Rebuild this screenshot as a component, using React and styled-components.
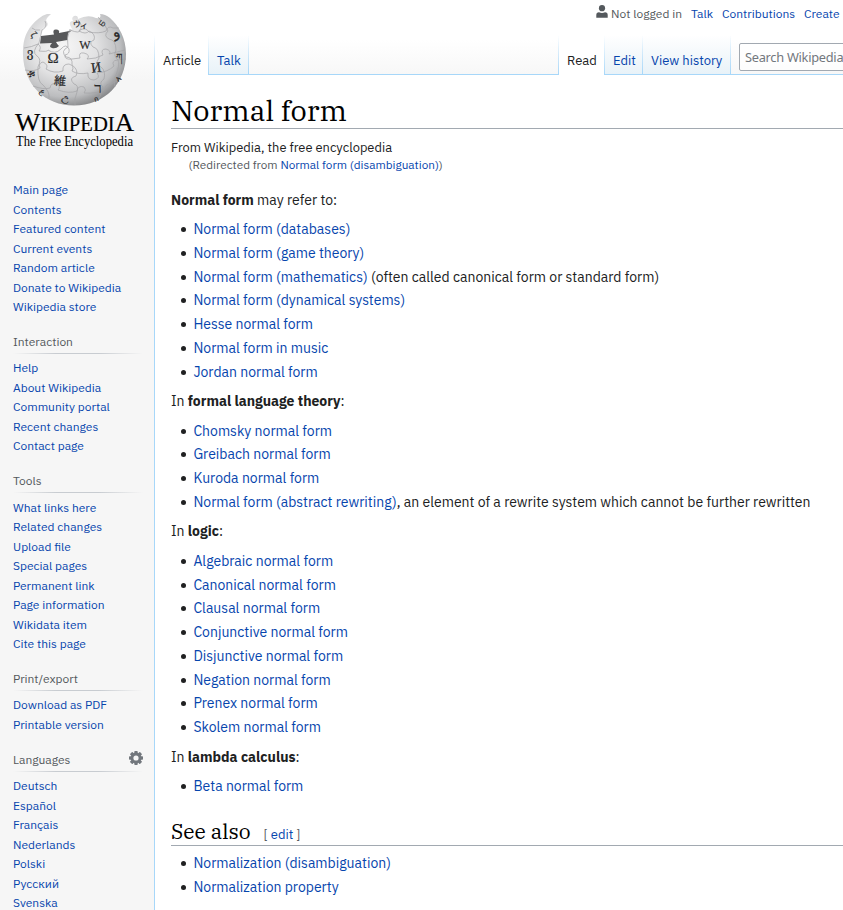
import React from "react";
import styled, { createGlobalStyle, css } from "styled-components";

const sans = '"IBM Plex Sans", Roboto, "Liberation Sans", sans-serif';

const Global = createGlobalStyle`
  *, *::before, *::after { box-sizing: border-box; }
  html, body { margin: 0; padding: 0; background: #fff; overflow: hidden; }
  body { font-family: ${sans}; color: #202122; }
`;

const Page = styled.div`
  display: grid;
  grid-template-columns: 154px 1fr;
  width: 100%;
  height: 910px;
  overflow: hidden;
  background: #f6f6f6 linear-gradient(#fff 50%, #f6f6f6 100%) 0 0 / 100% 80px no-repeat;
`;

const Link = styled.a`
  color: #0645ad;
  text-decoration: none;
`;

const Sidebar = styled.aside`
  height: 910px;
  overflow: hidden;
`;

const LogoLink = styled.a`
  display: block;
  height: 160px;
  svg { display: block; }
`;

const Portal = styled.nav`
  margin: 0 11px 0 13px;
  padding-top: ${(p) => (p.$first ? "20px" : "16.5px")};
`;

const PortalHead = styled.h3`
  display: flex;
  justify-content: space-between;
  align-items: center;
  height: 21px;
  margin: 0;
  padding-bottom: 4px;
  font-size: 12px;
  font-weight: 400;
  color: #54595d;
  background: linear-gradient(to right, rgba(200, 204, 209, 0), #c8ccd1 33%, #c8ccd1 66%, rgba(200, 204, 209, 0)) bottom / 100% 1px no-repeat;
  svg { margin-top: -3px; }
`;

const PortalList = styled.ul`
  list-style: none;
  margin: 0;
  padding: ${(p) => (p.$first ? "0" : "4.25px")} 0 0;
`;

const PortalItem = styled.li`
  height: 19.5px;
  padding: 3px 0;
  font-size: 12px;
  line-height: 13.5px;
  white-space: nowrap;
`;

const Main = styled.div`
  display: flex;
  flex-direction: column;
  min-width: 0;
  height: 910px;
  overflow: hidden;
`;

const fade = "linear-gradient(to bottom, rgba(167,215,249,0), #a7d7f9)";

const Header = styled.header`
  flex: none;
  display: flex;
  flex-direction: column;
  height: 75px;
  background:
    ${fade} 0 100% / 1px 40px no-repeat,
    linear-gradient(#a7d7f9, #a7d7f9) 1px 100% / 100% 1px no-repeat;
`;

const Personal = styled.div`
  display: flex;
  align-items: center;
  height: 35px;
  padding: 0 0 8px 442px;
  font-size: 12px;
  white-space: nowrap;
  color: #54595d;
  svg { flex: none; margin: -5px 3px 0 0; }
  a { margin-left: 9px; }
`;

const Tabs = styled.div`
  display: flex;
  height: 40px;
  padding-left: 1px;
`;

const Tab = styled.a`
  flex: none;
  width: ${(p) => p.$w}px;
  height: ${(p) => (p.$active ? 40 : 39)}px;
  padding: 18px 0 0 8px;
  font-size: 13px;
  line-height: 16px;
  white-space: nowrap;
  color: ${(p) => (p.$active ? "#202122" : "#0645ad")};
  background:
    ${fade} 100% 0 / 1px 100% no-repeat
    ${(p) => (p.$active ? ", linear-gradient(#fff, #fff)" : ", linear-gradient(#fff, #e8f2f8)")};
`;

const Edge = styled.span`
  flex: none;
  width: 1px;
  height: 40px;
  margin-left: 309px;
  background: ${fade};
`;

const Search = styled.div`
  flex: none;
  width: 200px;
  height: 28px;
  margin: 8px 0 0 8px;
  padding: 5px 5px;
  border: 1px solid #a2a9b1;
  border-radius: 2px;
  background: rgba(255, 255, 255, 0.7);
  color: #72777d;
  font-family: "Noto Sans", sans-serif;
  font-size: 12.8px;
  line-height: 17px;
  letter-spacing: -0.27px;
`;

const Content = styled.main`
  flex: 1;
  min-height: 0;
  overflow: hidden;
  padding: 18px 0 0 16px;
  border-left: 1px solid #a7d7f9;
  background: #fff;
`;

const serif = css`
  font-family: "IBM Plex Serif", "DejaVu Serif Condensed", "DejaVu Serif", serif;
  font-weight: 400;
  color: #000;
`;

const Title = styled.h1`
  ${serif}
  height: 36px;
  margin: 0;
  border-bottom: 1px solid #a2a9b1;
  font-size: 28.8px;
  line-height: 35px;
`;

const SubTitle = styled.div`
  margin-top: 10px;
  font-size: 12.88px;
  line-height: 18px;
`;

const Redirect = styled.div`
  margin: -1px 0 0 17.5px;
  font-size: 11.76px;
  line-height: 17px;
  color: #54595d;
`;

const Body = styled.div`
  margin-top: 15.5px;
  font-size: 14px;
  line-height: 22.4px;
`;

const Para = styled.p`
  margin: 7px 0;
  &:first-child { margin-top: 0; }
`;

const List = styled.ul`
  margin: 4.2px 0 0 22.4px;
  padding: 0;
  list-style: none;
`;

const Item = styled.li`
  margin-bottom: 1.4px;
  white-space: nowrap;
  &::before {
    content: "";
    display: inline-block;
    width: 5px;
    height: 5px;
    margin: 0 7.500px 2px -12.500px;
    border-radius: 50%;
    background: #202122;
  }
`;

const SectionHead = styled.h2`
  display: flex;
  align-items: baseline;
  height: 29px;
  margin: 19px 0 6.5px;
  border-bottom: 1px solid #a2a9b1;
  ${serif}
  font-size: 21px;
  line-height: 28px;
`;

const EditSection = styled.span`
  margin-left: 13px;
  font-family: ${sans};
  font-size: 13px;
  color: #54595d;
`;

const letters = [
  ["Ω", 53, 63, 15, 0], ["W", 85, 49, 12, 0], ["И", 96, 72, 14, -8],
  ["維", 60, 85, 12, 5], ["ר", 98, 93, 15, 0], ["ウ", 77, 27, 8, -10],
  ["ィ", 84, 28, 8, 0], ["و", 115, 37, 15, -20], ["ம", 103, 26, 9, 35],
  ["ζ", 34, 38, 10, 45], ["ვ", 30, 57, 12, 0], ["ቋ", 32, 77, 11, 50],
  ["ཀ", 119, 60, 9, 0], ["አ", 118, 81, 8, -35], ["ع", 43, 94, 8, 40],
  ["උ", 66, 101, 10, 15], ["ก", 96, 101, 7, -20],
];

const Logo = () => (
  <svg width="154" height="160" viewBox="0 0 154 160">
    <defs>
      <radialGradient id="globe" cx="0.4" cy="0.36" r="0.7">
        <stop offset="0" stopColor="#f6f6f6" />
        <stop offset="0.45" stopColor="#e2e2e3" />
        <stop offset="0.78" stopColor="#bcbdbf" />
        <stop offset="1" stopColor="#77787a" />
      </radialGradient>
    </defs>
    <path
      d="M47 14C41 16 36 20 32 25C25 33 22.500 43 23 55C24 85 45 105.500 74 105.500C105 105.500 126 83 126 54C126 38 119 26 110 18Q105 14 100 14Q102 19 96 18Q88 14 78 19Q78 15 74 16Q71 18 73 21Q69 21 70 25L72 29L67 31L68 40L58 42Q61 49 53 48Q48 46 52 43L39 43L41 33L43 28Q50 26 47 22Q44 20 51 14Z"
      fill="url(#globe)"
    />
    <path
      d="M41 36L54 34.500Q52 29.500 56 29.500Q60 29.500 59 33L72 30.500L68 33L67.500 40L56 42Q57 44 59 46Q56 49 52 48Q48 47 52 43L40 43.500Z"
      fill="#57585a"
    />
    <g fill="none" stroke="#a3a4a6" strokeWidth="0.7">
      <path d="M24 48Q32 47 38 44Q42 47 39 51Q48 52 48 50Q55 55 61 49Q66 43 69 49Q70 54 65 55Q64 60 72 59L80 58Q78 52 84 53Q91 55 87 59Q96 59 103 55Q100 49 106 49Q112 51 109 54L125 50" />
      <path d="M25 70Q35 72 40 68Q38 63 43 62Q49 65 46 69Q54 74 63 71Q62 64 69 64Q75 66 72 71Q78 75 88 73Q87 80 94 80Q101 78 97 73Q108 72 114 66Q111 61 117 60L126 59" />
      <path d="M33 86Q44 90 50 88Q51 82 57 84Q61 87 58 90Q69 94 77 91Q78 85 84 87Q87 90 84 93Q98 94 105 89Q105 84 111 84L119 80" />
      <path d="M45 21Q48 27 42 30L39 43Q31 52 37 56Q42 59 38 67Q37 82 43 85Q50 92 49 98" />
      <path d="M70 29Q66 38 68 47Q60 51 66 57Q73 57 72 65Q79 70 76 76Q68 78 74 84Q79 85 77 92Q74 99 75 105" />
      <path d="M78 20Q84 26 79 31Q86 35 89 31Q96 34 94 40Q88 42 93 47Q99 48 99 58Q94 65 101 67Q106 71 104 79Q98 83 103 87Q101 97 97 101" />
      <path d="M98 17Q106 25 108 31Q103 36 109 39Q116 40 116 50Q113 56 118 60Q120 65 116 75Q113 79 115 87" />
      <path d="M70 30Q80 34 80 30Q86 27 89 32Q99 34 106 31Q108 25 113 28L119 28M32 28Q35 31 40 30" />
    </g>
    <g fill="#29292a" fontFamily='"Liberation Serif", "DejaVu Serif", "Noto Sans CJK JP", "Noto Sans", serif' textAnchor="middle" stroke="#29292a" strokeWidth="0.2">
      {letters.map(([ch, x, y, size, turn]) => (
        <text key={ch} x={x} y={y} fontSize={size} transform={`rotate(${turn} ${x} ${y - size * 0.35})`}>{ch}</text>
      ))}
    </g>
    <g fill="#000" fontFamily='"Liberation Serif", serif'>
      <text x="15" y="131" fontSize="26" textLength="119" lengthAdjust="spacingAndGlyphs" stroke="#000" strokeWidth="0.2">
        W<tspan fontSize="20">IKIPEDI</tspan>A
      </text>
      <text x="16" y="145.500" fontSize="14.500" textLength="117" lengthAdjust="spacingAndGlyphs">The Free Encyclopedia</text>
    </g>
  </svg>
);

const UserIcon = () => (
  <svg width="12" height="13" viewBox="0 0 12 13" fill="#54595d">
    <circle cx="6" cy="3.200" r="3.100" />
    <path d="M0.300 12.800V10Q0.300 7.300 3 7.300Q6 8.700 9 7.300Q11.700 7.300 11.700 10V12.800Z" />
  </svg>
);

const Gear = () => (
  <svg width="14" height="14" viewBox="0 0 14 14">
    <g fill="#72777d">
      {[0, 45, 90, 135].map((a) => (
        <rect key={a} x="5.300" y="0" width="3.400" height="14" rx="0.700" transform={`rotate(${a} 7 7)`} />
      ))}
      <circle cx="7" cy="7" r="5.400" />
    </g>
    <circle cx="7" cy="7" r="2.600" fill="#f6f6f6" />
  </svg>
);

const portals = [
  { items: ["Main page", "Contents", "Featured content", "Current events", "Random article", "Donate to Wikipedia", "Wikipedia store"] },
  { title: "Interaction", items: ["Help", "About Wikipedia", "Community portal", "Recent changes", "Contact page"] },
  { title: "Tools", items: ["What links here", "Related changes", "Upload file", "Special pages", "Permanent link", "Page information", "Wikidata item", "Cite this page"] },
  { title: "Print/export", items: ["Download as PDF", "Printable version"] },
  { title: "Languages", gear: true, items: ["Deutsch", "Español", "Français", "Nederlands", "Polski", "Русский", "Svenska"] },
];

const sections = [
  {
    lead: <><b>Normal form</b> may refer to:</>,
    items: [["Normal form (databases)"], ["Normal form (game theory)"], ["Normal form (mathematics)", " (often called canonical form or standard form)"], ["Normal form (dynamical systems)"], ["Hesse normal form"], ["Normal form in music"], ["Jordan normal form"]],
  },
  {
    lead: <>In <b>formal language theory</b>:</>,
    items: [["Chomsky normal form"], ["Greibach normal form"], ["Kuroda normal form"], ["Normal form (abstract rewriting)", ", an element of a rewrite system which cannot be further rewritten"]],
  },
  {
    lead: <>In <b>logic</b>:</>,
    items: [["Algebraic normal form"], ["Canonical normal form"], ["Clausal normal form"], ["Conjunctive normal form"], ["Disjunctive normal form"], ["Negation normal form"], ["Prenex normal form"], ["Skolem normal form"]],
  },
  { lead: <>In <b>lambda calculus</b>:</>, items: [["Beta normal form"]] },
];

const Links = ({ items }) => (
  <List>
    {items.map(([name, rest]) => (
      <Item key={name}><Link>{name}</Link>{rest}</Item>
    ))}
  </List>
);

export default function App() {
  return (
    <Page>
      <Global />
      <Sidebar>
        <LogoLink><Logo /></LogoLink>
        {portals.map((p, i) => (
          <Portal key={i} $first={!p.title}>
            {p.title && <PortalHead>{p.title}{p.gear && <Gear />}</PortalHead>}
            <PortalList $first={!p.title}>
              {p.items.map((t) => <PortalItem key={t}><Link>{t}</Link></PortalItem>)}
            </PortalList>
          </Portal>
        ))}
      </Sidebar>
      <Main>
        <Header>
          <Personal>
            <UserIcon />Not logged in<Link>Talk</Link><Link>Contributions</Link><Link>Create</Link>
          </Personal>
          <Tabs>
            <Tab $w={54} $active>Article</Tab>
            <Tab $w={40}>Talk</Tab>
            <Edge />
            <Tab $w={46} $active>Read</Tab>
            <Tab $w={38}>Edit</Tab>
            <Tab $w={88}>View history</Tab>
            <Search>Search Wikipedia</Search>
          </Tabs>
        </Header>
        <Content>
          <Title>Normal form</Title>
          <SubTitle>From Wikipedia, the free encyclopedia</SubTitle>
          <Redirect>(Redirected from <Link>Normal form (disambiguation)</Link>)</Redirect>
          <Body>
            {sections.map((s, i) => (
              <React.Fragment key={i}>
                <Para>{s.lead}</Para>
                <Links items={s.items} />
              </React.Fragment>
            ))}
            <SectionHead>See also<EditSection>[ <Link>edit</Link> ]</EditSection></SectionHead>
            <Links items={[["Normalization (disambiguation)"], ["Normalization property"]]} />
          </Body>
        </Content>
      </Main>
    </Page>
  );
}
